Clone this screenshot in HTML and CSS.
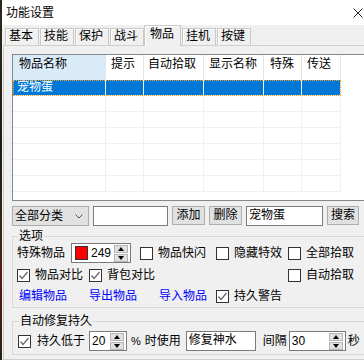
FILE: index.html
```html
<!DOCTYPE html>
<html>
<head>
<meta charset="utf-8">
<link rel="stylesheet" href="styles.css">
</head>
<body>
<div class="screen">
  <div class="backdrop"></div>
  <div class="window">
    <div class="titlebar">
      <span class="title">功能设置</span>
      <svg class="close" width="10" height="10" viewBox="0 0 10 10"><path d="M0.5 0.5 L9.5 9.5 M9.5 0.5 L0.5 9.5" stroke="#222" stroke-width="1" fill="none"/></svg>
    </div>
    <div class="tabs">
      <div class="tab">基本</div>
      <div class="tab">技能</div>
      <div class="tab">保护</div>
      <div class="tab">战斗</div>
      <div class="tab active">物品</div>
      <div class="tab">挂机</div>
      <div class="tab">按键</div>
    </div>
    <div class="panel">
      <div class="list">
        <div class="list-head">
          <div class="hcell c1 hot">物品名称</div>
          <div class="hcell c2">提示</div>
          <div class="hcell c3">自动拾取</div>
          <div class="hcell c4">显示名称</div>
          <div class="hcell c5">特殊</div>
          <div class="hcell c6">传送</div>
        </div>
        <div class="row selected"><div class="cell c1">宠物蛋</div><div class="cell c2"></div><div class="cell c3"></div><div class="cell c4"></div><div class="cell c5"></div><div class="cell c6"></div></div>
        <div class="row"><div class="cell c1"></div><div class="cell c2"></div><div class="cell c3"></div><div class="cell c4"></div><div class="cell c5"></div><div class="cell c6"></div></div>
        <div class="row"><div class="cell c1"></div><div class="cell c2"></div><div class="cell c3"></div><div class="cell c4"></div><div class="cell c5"></div><div class="cell c6"></div></div>
        <div class="row"><div class="cell c1"></div><div class="cell c2"></div><div class="cell c3"></div><div class="cell c4"></div><div class="cell c5"></div><div class="cell c6"></div></div>
        <div class="row"><div class="cell c1"></div><div class="cell c2"></div><div class="cell c3"></div><div class="cell c4"></div><div class="cell c5"></div><div class="cell c6"></div></div>
        <div class="row"><div class="cell c1"></div><div class="cell c2"></div><div class="cell c3"></div><div class="cell c4"></div><div class="cell c5"></div><div class="cell c6"></div></div>
        <div class="row"><div class="cell c1"></div><div class="cell c2"></div><div class="cell c3"></div><div class="cell c4"></div><div class="cell c5"></div><div class="cell c6"></div></div>
      </div>

      <div class="toolbar">
        <div class="combo"><span>全部分类</span><svg width="8" height="5" viewBox="0 0 8 5"><path d="M0.5 0.5 L4 4 L7.5 0.5" stroke="#555" stroke-width="1" fill="none"/></svg></div>
        <div class="input w-filter"></div>
        <div class="button">添加</div>
        <div class="button">删除</div>
        <div class="input w-name">宠物蛋</div>
        <div class="button">搜索</div>
      </div>

      <fieldset class="group options">
        <legend>选项</legend>
        <div class="opt-grid">
          <span class="label g-c1">特殊物品</span>
          <div class="colorbox g-c2">
            <span class="swatch"></span>
            <span class="num">249</span>
            <span class="spin"><span class="spin-btn up"></span><span class="spin-btn down"></span></span>
          </div>
          <label class="check g-c4"><span class="box"></span>物品快闪</label>
          <label class="check g-c6"><span class="box"></span>隐藏特效</label>
          <label class="check g-c7"><span class="box"></span>全部拾取</label>

          <label class="check r2 g-a"><span class="box"><svg width="11" height="11" viewBox="0 0 11 11"><path d="M1.5 5.5 L4 8.5 L9.5 2" stroke="#666" stroke-width="1.2" fill="none"/></svg></span>物品对比</label>
          <label class="check r2 g-b"><span class="box"><svg width="11" height="11" viewBox="0 0 11 11"><path d="M1.5 5.5 L4 8.5 L9.5 2" stroke="#666" stroke-width="1.2" fill="none"/></svg></span>背包对比</label>
          <label class="check r2 g-c7"><span class="box"></span>自动拾取</label>

          <a class="link r3 g-a first">编辑物品</a>
          <a class="link r3 g-d">导出物品</a>
          <a class="link r3 g-c5">导入物品</a>
          <label class="check r3 g-c6"><span class="box"><svg width="11" height="11" viewBox="0 0 11 11"><path d="M1.5 5.5 L4 8.5 L9.5 2" stroke="#666" stroke-width="1.2" fill="none"/></svg></span>持久警告</label>
        </div>
      </fieldset>

      <fieldset class="group repair">
        <legend>自动修复持久</legend>
        <div class="repair-row">
          <label class="check"><span class="box"><svg width="11" height="11" viewBox="0 0 11 11"><path d="M1.5 5.5 L4 8.5 L9.5 2" stroke="#666" stroke-width="1.2" fill="none"/></svg></span>持久低于</label>
          <div class="spinbox w-low"><span class="num">20</span><span class="spin"><span class="spin-btn up"></span><span class="spin-btn down"></span></span></div>
          <span class="pct">%</span>
          <span class="label">时使用</span>
          <div class="input w-potion">修复神水</div>
          <span class="label gap-l">间隔</span>
          <div class="spinbox w-int"><span class="num">30</span><span class="spin"><span class="spin-btn up"></span><span class="spin-btn down"></span></span></div>
          <span class="label">秒</span>
        </div>
      </fieldset>
    </div>
  </div>
</div>
</body>
</html>
```

FILE: styles.css
```css
* { box-sizing: border-box; }

html, body {
  margin: 0;
  padding: 0;
}

body {
  width: 364px;
  height: 360px;
  overflow: hidden;
  background: #f0f0f0;
  font-family: "Liberation Sans", "Noto Sans CJK SC", sans-serif;
  font-size: 12px;
  color: #000;
}

.screen {
  display: flex;
  width: 364px;
  height: 360px;
}

.backdrop {
  width: 2px;
  flex: none;
  background: linear-gradient(#2d2a1c, #1f1c12 40%, #3a2a18 70%, #5a1a12 75%, #2a2418);
}

.window {
  flex: 1;
  display: flex;
  flex-direction: column;
  background: #f0f0f0;
}

.titlebar {
  height: 25px;
  background: #fff;
  display: flex;
  align-items: center;
  padding-left: 4px;
  padding-right: 6px;
  flex: none;
}

.title {
  flex: 1;
  line-height: 16px;
  padding-top: 1px;
}

.close { display: block; margin-top: 1px; }

.tabs {
  height: 20px;
  display: flex;
  align-items: flex-end;
  padding-left: 3px;
  flex: none;
}

.tab {
  width: 34px;
  height: 17px;
  margin-right: 1px;
  border: 1px solid #c9c9c9;
  border-bottom: none;
  background: #f0f0f0;
  box-shadow: inset 1px 1px 0 #fdfdfd;
  line-height: 15px;
  padding-left: 3px;
}

.tab.active {
  width: 37px;
  height: 21px;
  margin-left: -1px;
  margin-bottom: -1px;
  position: relative;
  z-index: 1;
  padding-left: 5px;
  line-height: 17px;
}

.panel {
  flex: 1;
  margin: 0 1px 0 1px;
  border: 1px solid #cfcfcf;
  border-bottom-color: #cfcfcf;
  padding: 8px 2px 2px 8px;
  display: flex;
  flex-direction: column;
  min-height: 0;
}

/* list view */
.list {
  height: 147px;
  border: 1px solid #828790;
  background: #fff;
  overflow: hidden;
  flex: none;
}

.list-head {
  display: flex;
  height: 25px;
}

.hcell {
  height: 25px;
  border-right: 1px solid #e5e5e5;
  padding-left: 5px;
  padding-top: 1px;
  line-height: 17px;
  white-space: nowrap;
}

.hcell.c1 { padding-left: 6px; }
.hcell.c3 { padding-left: 4px; }
.hcell.c5 { padding-left: 6px; }

.hot { background: #d9ebf9; }

.c1 { width: 93px; }
.c2 { width: 38px; }
.c3 { width: 60px; }
.c4 { width: 60px; }
.c5 { width: 38px; }
.c6 { width: 39px; }

.row {
  display: flex;
  width: fit-content;
  height: 16px;
  border-bottom: 1px solid #f0f0f0;
}

.cell {
  height: 15px;
  border-right: 1px solid #f0f0f0;
  line-height: 15px;
  padding-left: 4px;
  white-space: nowrap;
}

.row.selected .cell {
  background: #0078d7;
  color: #fff;
}

.row.selected {
  outline: 1px dotted #f0a030;
  outline-offset: -1px;
}

/* toolbar */
.toolbar {
  display: flex;
  gap: 4px;
  margin-top: 5px;
  height: 20px;
  flex: none;
}

.combo {
  width: 77px;
  height: 20px;
  background: #e1e1e1;
  border: 1px solid #adadad;
  display: flex;
  align-items: center;
  justify-content: space-between;
  padding: 0 5px 0 2px;
  line-height: 16px;
}

.input {
  height: 20px;
  background: #fff;
  border: 1px solid #7a7a7a;
  line-height: 17px;
  padding-left: 2px;
  white-space: nowrap;
}

.w-filter { width: 75px; }
.w-name { width: 77px; }
.w-potion { width: 70px; }

.button {
  width: 33px;
  height: 19px;
  background: #e1e1e1;
  border: 1px solid #adadad;
  text-align: center;
  line-height: 16px;
}

.toolbar .button:last-child { width: 32px; }

/* group boxes */
.group {
  margin: 3px 0 0 0;
  border: 1px solid #d8d8d8;
  padding: 0 4px 2px 4px;
  min-width: 0;
}

.group legend {
  padding: 0 1px;
  margin-left: 1px;
  line-height: 14px;
  height: 14px;
}

.options .opt-grid {
  display: grid;
  grid-template-columns: 54px 18px 51px 19px 57px 72px 1fr;
  grid-template-rows: 20px 24px 18px;
  align-items: center;
}

.g-c1 { grid-column: 1; }
.g-c2 { grid-column: 2 / 4; }
.g-c4 { grid-column: 4 / 6; }
.g-c5 { grid-column: 5; }
.g-c6 { grid-column: 6; }
.g-c7 { grid-column: 7; }
.g-a { grid-column: 1 / 3; }
.g-b { grid-column: 3 / 6; }
.g-d { grid-column: 3 / 5; }
.r2 { grid-row: 2; }
.r3 { grid-row: 3; }

.label { white-space: nowrap; line-height: 16px; }

.check {
  display: flex;
  align-items: center;
  gap: 5px;
  white-space: nowrap;
  line-height: 16px;
}

.box {
  width: 13px;
  height: 13px;
  border: 1px solid #333;
  background: #fff;
  flex: none;
  display: flex;
  align-items: center;
  justify-content: center;
}

.box svg { display: block; }

.link {
  color: #0000ff;
  white-space: nowrap;
  line-height: 16px;
}

.link.first { margin-left: 2px; }

.colorbox {
  width: 60px;
  height: 20px;
  border: 1px solid #7a7a7a;
  background: #fff;
  display: flex;
  align-items: center;
  padding-left: 3px;
}

.swatch {
  width: 13px;
  height: 14px;
  background: #ff0000;
  border: 1px solid #333;
  flex: none;
}

.colorbox .num {
  margin-left: 3px;
  width: 23px;
}

.num { line-height: 16px; }

.spin {
  width: 14px;
  height: 17px;
  display: flex;
  flex-direction: column;
  gap: 1px;
  flex: none;
  margin-left: auto;
  margin-right: 2px;
}

.spin-btn {
  flex: 1;
  background: #e1e1e1;
  border: 1px solid #b5b5b5;
  display: flex;
  align-items: center;
  justify-content: center;
}

.spin-btn::after {
  content: "";
  width: 0;
  height: 0;
  border-left: 3.5px solid transparent;
  border-right: 3.5px solid transparent;
}

.spin-btn.up::after { border-bottom: 4px solid #000; }
.spin-btn.down::after { border-top: 4px solid #000; }

/* repair row */
.repair {
  margin-top: 6px;
  padding: 3px 4px 3px 5px;
}

.repair-row {
  display: flex;
  align-items: center;
  height: 20px;
}

.repair-row .check { gap: 6px; margin-right: 4px; }

.spinbox {
  height: 20px;
  border: 1px solid #7a7a7a;
  background: #fff;
  display: flex;
  align-items: center;
  padding-left: 2px;
}

.w-low { width: 38px; }
.w-int { width: 57px; margin-left: 2px; margin-right: 2px; }

.pct {
  margin-left: 4px;
  margin-right: 4px;
  font-size: 11px;
}

.repair-row .w-potion { margin-left: 5px; }

.gap-l { margin-left: 7px; }
```
